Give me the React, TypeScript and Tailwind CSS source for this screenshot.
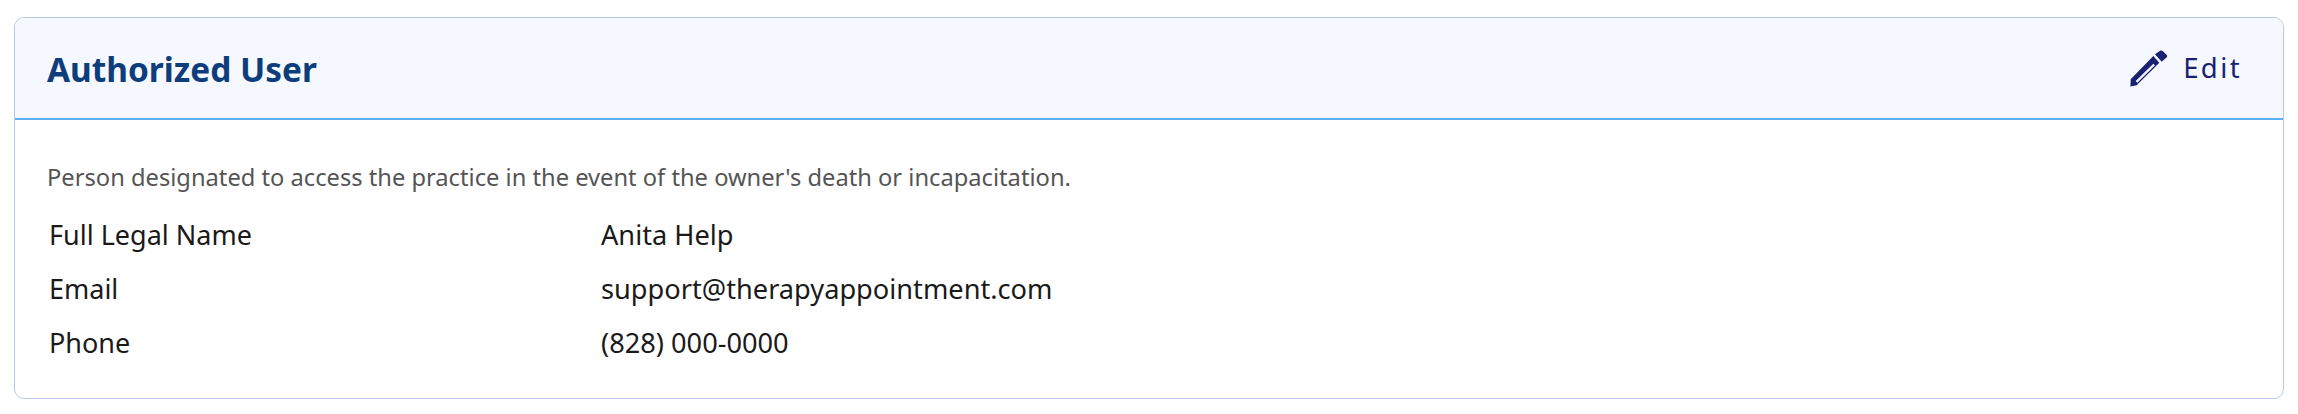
const rows = [
  { label: "Full Legal Name", value: "Anita Help" },
  { label: "Email", value: "support@therapyappointment.com" },
  { label: "Phone", value: "(828) 000-0000" },
];

export default function App() {
  return (
    <div className="bg-white h-[414px] pt-[17px] px-[14px] font-['Noto_Sans',sans-serif]">
      <div className="h-[382px] border border-[#bcc7e5] rounded-[10px] overflow-hidden">
        {/* Header */}
        <div className="h-[102px] flex items-center justify-between pl-[32px] pr-[41px] bg-[#f5f8ff] border-b-2 border-[#5cb0fb]">
          <h2 className="text-[33.4px] font-bold text-[#0e3d7c] pt-[2px]">Authorized User</h2>
          <button className="flex items-center gap-[15px] text-[#1a2173]">
            <svg className="w-[38px] h-[37px]" viewBox="0 0 38 37" fill="currentColor">
              <path d="M25 4.3 L30.5 0.6 Q31.7 0 32.7 1 L36.8 5 Q37.8 6 36.8 7.2 L31.7 11.7 Z" />
              <path fillRule="evenodd" d="M23.3 6 L29.3 12.7 L6.7 35.3 L0.4 36.4 L0.7 29.3 Z M23.3 13.7 L5.7 31 L7.3 32.7 L25 15.3 Z" />
            </svg>
            <span className="text-[27.5px] tracking-[2.4px]">Edit</span>
          </button>
        </div>
        {/* Body */}
        <div className="pt-[41px] pl-[32px]">
          <p className="text-[23.7px] leading-[32px] text-[#555555]">
            Person designated to access the practice in the event of the owner's death or incapacitation.
          </p>
          <div className="mt-[15px] ml-[2px]">
            {rows.map((row) => (
              <div key={row.label} className="flex h-[54px] items-center text-[27px] text-[#1a1a1a]">
                <div className="w-[552px]">{row.label}</div>
                <div className="text-[27.2px]">{row.value}</div>
              </div>
            ))}
          </div>
        </div>
      </div>
    </div>
  );
}
